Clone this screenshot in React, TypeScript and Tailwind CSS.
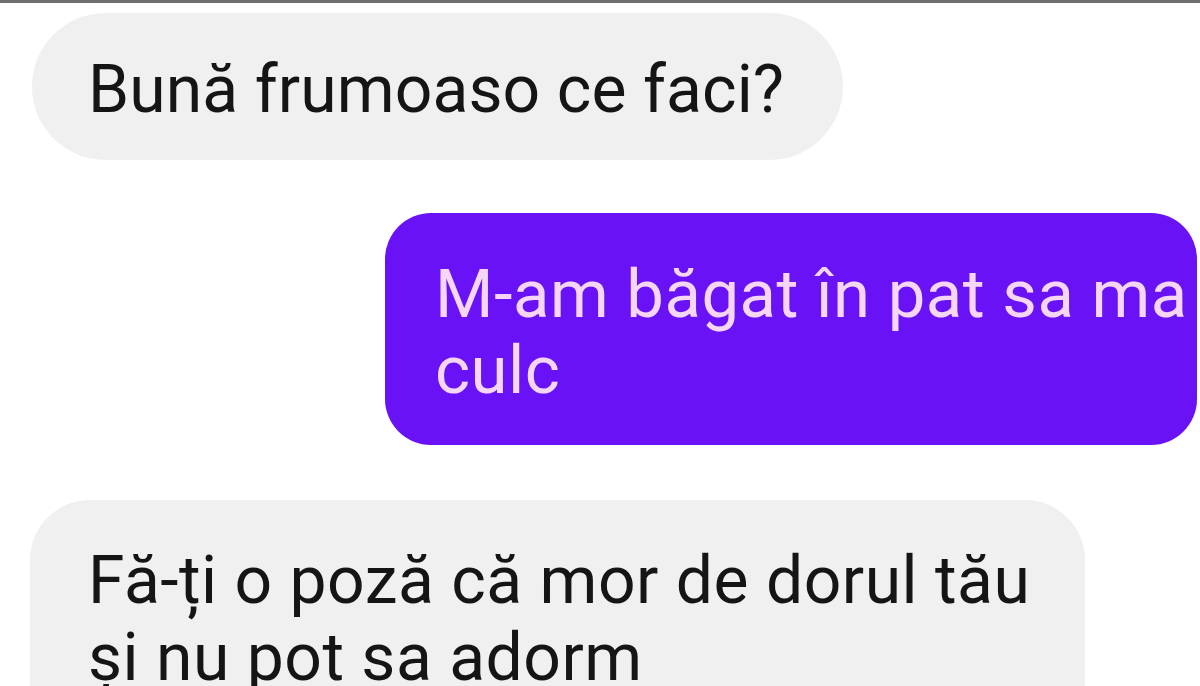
import React from "react";

export default function App() {
  return (
    <div
      className="w-[1200px] h-[686px] overflow-hidden bg-white flex flex-col"
      style={{ fontFamily: "Roboto, 'Noto Sans', sans-serif" }}
    >
      <div className="h-[3px] bg-[#6e6e6e] shrink-0" />
      <div className="mt-[10px] ml-[32px] w-[811px] h-[147px] rounded-full bg-[#f0f0f0] flex items-center pl-[56px] pt-[6px] shrink-0">
        <span className="text-[66px] leading-none text-[#151515] tracking-[0.1px]">Bună frumoaso ce faci?</span>
      </div>
      <div className="mt-[53px] ml-[385px] w-[812px] h-[232px] rounded-[46px] bg-[#6a12f6] pl-[50px] pt-[43px] shrink-0">
        <p className="text-[67px] leading-[76px] text-[#f6d6f6] tracking-[0.5px]">
          M-am băgat în pat sa ma
          <br />
          culc
        </p>
      </div>
      <div className="mt-[55px] ml-[30px] w-[1055px] h-[260px] rounded-[60px] bg-[#f0f0f0] pl-[58px] pt-[42px] shrink-0">
        <p className="text-[66px] leading-[77px] text-[#151515] tracking-[0.5px]">
          Fă-ți o poză că mor de dorul tău
          <br />
          și nu pot sa adorm
        </p>
      </div>
    </div>
  );
}
